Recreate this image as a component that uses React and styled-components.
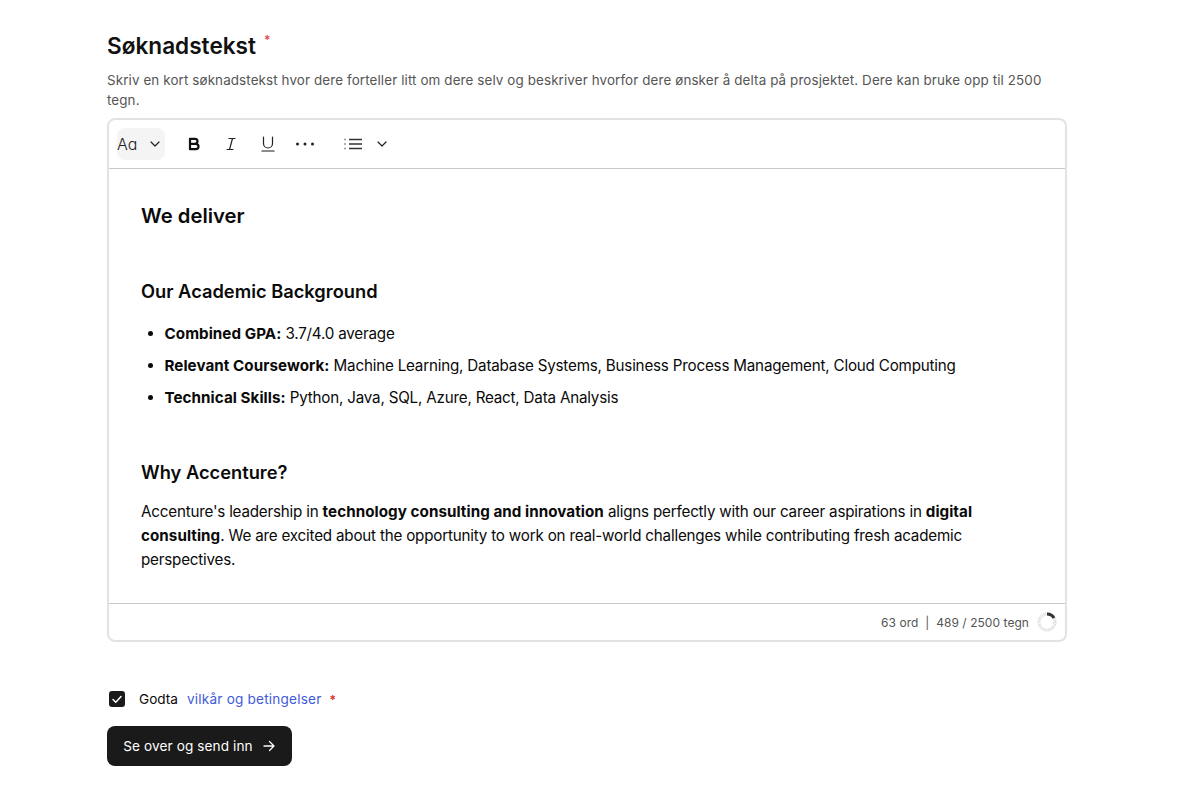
import React from 'react'
import styled, { createGlobalStyle } from 'styled-components'

const GlobalStyle = createGlobalStyle`
  html, body {
    margin: 0;
    background: #fff;
    font-family: Inter, "Liberation Sans", sans-serif;
    color: #0a0a0a;
  }
`
const Page = styled.div`
  width: 960px;
  margin-left: 107px;
  padding-top: 31px;
`
const Title = styled.h2`
  margin: 0;
  font-size: 22.6px;
  line-height: 30px;
  font-weight: 600;
  color: #111;
  display: flex;
`
const Star = styled.span`
  color: #e5484d;
  font-size: 12px;
  line-height: 14px;
  margin: 2px 0 0 8px;
`
const Help = styled.p`
  margin: 9px 0 8px;
  font-size: 13.4px;
  line-height: 20px;
  letter-spacing: 0.117px;
  color: #555;
`
const Editor = styled.div`
  border: 2px solid #e2e2e2;
  border-radius: 8px;
  height: 524px;
  box-sizing: border-box;
  display: flex;
  flex-direction: column;
`
const Toolbar = styled.div`
  height: 48px;
  flex: none;
  display: flex;
  align-items: center;
  padding-left: 8px;
  border-bottom: 1px solid #c8c8c8;
`
const FontSelect = styled.div`
  width: 48px;
  height: 32px;
  border-radius: 8px;
  background: #f4f4f4;
  display: flex;
  align-items: center;
  justify-content: space-between;
  padding: 0 3px 0 0;
  box-sizing: border-box;
  font-size: 16px;
  font-weight: 300;
  color: #222;
  margin-right: 10px;
`
const ToolButton = styled.span`
  width: 37px;
  height: 32px;
  display: flex;
  align-items: center;
  justify-content: center;
  color: #222;
`
const ListButton = styled(ToolButton)`
  margin-left: 11px;
  margin-right: 4px;
`
const Content = styled.div`
  flex: 1;
  padding: 34px 32px 0;
  font-size: 15.2px;
  line-height: 24px;
  color: #0a0a0a;
  letter-spacing: -0.2px;
`
const Strong = styled.b`
  font-weight: 700;
  letter-spacing: 0.05px;
`
const H1 = styled.h3`
  margin: 0 0 50px;
  font-size: 20.3px;
  line-height: 26px;
  font-weight: 600;
  letter-spacing: 0;
`
const H2 = styled.h4`
  margin: 0 0 19px;
  font-size: 18.3px;
  line-height: 24px;
  font-weight: 600;
  letter-spacing: 0;
`
const List = styled.ul`
  margin: 0 0 50px;
  padding-left: 23.5px;
`
const Item = styled.li`
  line-height: 24px;
  margin-bottom: 8px;
`
const Para = styled.p`
  margin: 0;
`
const WhyTitle = styled(H2)`
  margin-bottom: 16px;
`
const Footer = styled.div`
  height: 36px;
  flex: none;
  border-top: 1px solid #c8c8c8;
  display: flex;
  align-items: center;
  justify-content: flex-end;
  gap: 8px;
  padding-right: 8px;
  font-size: 12px;
  letter-spacing: 0.05px;
  color: #555;
`
const Accept = styled.div`
  display: flex;
  align-items: center;
  margin: 47px 0 0 2px;
  height: 20px;
  font-size: 13.6px;
  font-weight: 400;
`
const Box = styled.span`
  width: 16px;
  height: 16px;
  border-radius: 3px;
  background: #1a1a1a;
  display: flex;
  align-items: center;
  justify-content: center;
  margin-right: 14px;
`
const TermsLink = styled.a`
  color: #3f5bd8;
  margin-left: 9px;
  text-decoration: none;
  letter-spacing: 0.2px;
`
const AcceptStar = styled.span`
  color: #d92d20;
  margin-left: 8px;
  font-size: 12px;
  font-weight: 600;
`
const Submit = styled.button`
  margin-top: 17px;
  width: 185px;
  height: 40px;
  border: 0;
  border-radius: 8px;
  background: #1a1a1a;
  color: #fff;
  font: 400 13.6px Inter, "Liberation Sans", sans-serif;
  letter-spacing: 0.1px;
  display: flex;
  align-items: center;
  justify-content: center;
  gap: 9px;
`

const Chevron = () => (
  <svg width="14" height="14" viewBox="0 0 14 14" fill="none" stroke="#222" strokeWidth="1.2" strokeLinecap="round" strokeLinejoin="round">
    <path d="M3 5l4 4 4-4" />
  </svg>
)

const Spinner = () => (
  <svg width="20" height="20" viewBox="0 0 20 20" fill="none">
    <circle cx="10" cy="10" r="8" stroke="#dcdcdc" strokeWidth="3.2" strokeDasharray="1 0.7" />
    <path d="M10 2a8 8 0 0 1 7 4" stroke="#333" strokeWidth="3.2" />
  </svg>
)

export default function App() {
  return (
    <Page>
      <GlobalStyle />
      <Title>Søknadstekst<Star>*</Star></Title>
      <Help>Skriv en kort søknadstekst hvor dere forteller litt om dere selv og beskriver hvorfor dere ønsker å delta på prosjektet. Dere kan bruke opp til 2500 tegn.</Help>
      <Editor>
        <Toolbar>
          <FontSelect>Aɑ<Chevron /></FontSelect>
          <ToolButton>
            <svg width="16" height="16" viewBox="0 0 16 16" fill="none" stroke="#111" strokeWidth="2.2" strokeLinejoin="round">
              <path d="M4 2.8h5a2.5 2.5 0 0 1 0 5H4zM4 7.8h5.8a2.7 2.7 0 0 1 0 5.4H4z" />
            </svg>
          </ToolButton>
          <ToolButton>
            <svg width="16" height="16" viewBox="0 0 16 16" fill="none" stroke="#222" strokeWidth="1.2" strokeLinecap="round">
              <path d="M6 2.5h6M4 13.5h6M9.5 2.5l-3 11" />
            </svg>
          </ToolButton>
          <ToolButton>
            <svg width="16" height="18" viewBox="0 0 16 18" fill="none" stroke="#222" strokeWidth="1.2" strokeLinecap="round">
              <path d="M3.5 2v6.5a4.5 4.5 0 0 0 9 0V2" />
              <path d="M2 16h12" stroke="#666" strokeWidth="1.5" />
            </svg>
          </ToolButton>
          <ToolButton>
            <svg width="20" height="4" viewBox="0 0 20 4" fill="#222">
              <circle cx="2.5" cy="2" r="1.5" /><circle cx="10" cy="2" r="1.5" /><circle cx="17.5" cy="2" r="1.5" />
            </svg>
          </ToolButton>
          <ListButton>
            <svg width="18" height="14" viewBox="0 0 18 14" fill="none" stroke="#333" strokeWidth="1.4">
              <path d="M5 2.5h13M5 7h13M5 11.5h13" />
              <path d="M0.5 2.5h2M0.5 7h2M0.5 11.5h2" strokeDasharray="1 1" />
            </svg>
          </ListButton>
          <Chevron />
        </Toolbar>
        <Content>
          <H1>We deliver</H1>
          <H2>Our Academic Background</H2>
          <List>
            <Item><Strong>Combined GPA:</Strong> 3.7/4.0 average</Item>
            <Item><Strong>Relevant Coursework:</Strong> Machine Learning, Database Systems, Business Process Management, Cloud Computing</Item>
            <Item><Strong>Technical Skills:</Strong> Python, Java, SQL, Azure, React, Data Analysis</Item>
          </List>
          <WhyTitle>Why Accenture?</WhyTitle>
          <Para>Accenture's leadership in <Strong>technology consulting and innovation</Strong> aligns perfectly with our career aspirations in <Strong>digital consulting</Strong>. We are excited about the opportunity to work on real-world challenges while contributing fresh academic perspectives.</Para>
        </Content>
        <Footer>
          <span>63 ord &nbsp;|&nbsp; 489 / 2500 tegn</span>
          <Spinner />
        </Footer>
      </Editor>
      <Accept>
        <Box>
          <svg width="12" height="12" viewBox="0 0 12 12" fill="none" stroke="#fff" strokeWidth="1.5" strokeLinecap="round" strokeLinejoin="round">
            <path d="M2 6.5l2.8 2.8L10 3.5" />
          </svg>
        </Box>
        Godta<TermsLink>vilkår og betingelser</TermsLink><AcceptStar>*</AcceptStar>
      </Accept>
      <Submit>
        Se over og send inn
        <svg width="14" height="14" viewBox="0 0 14 14" fill="none" stroke="#fff" strokeWidth="1.3" strokeLinecap="round" strokeLinejoin="round">
          <path d="M2 7h10M7.5 2.5L12 7l-4.5 4.5" />
        </svg>
      </Submit>
    </Page>
  )
}
